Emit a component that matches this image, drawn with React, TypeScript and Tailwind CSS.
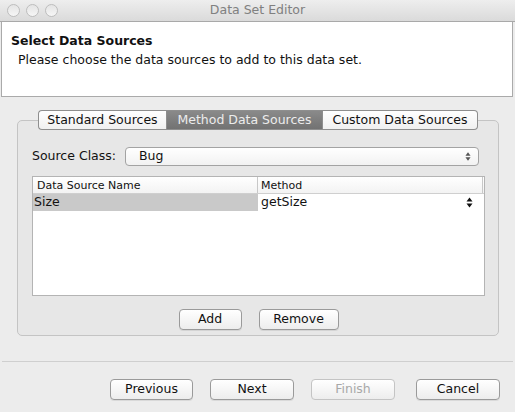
const font = { fontFamily: '"DejaVu Sans", "Lucida Grande", sans-serif' };

const Arrows = ({ color = "#333", w = 7 }: { color?: string; w?: number }) => (
  <svg width={w} height="11" viewBox="0 0 7 11">
    <path d="M3.5 0.5 L6.5 4.5 L0.5 4.5 Z" fill={color} />
    <path d="M0.5 6.5 L6.5 6.5 L3.5 10.5 Z" fill={color} />
  </svg>
);

const Light = () => (
  <div className="w-[13px] h-[13px] rounded-full border border-[#bdbdbd] bg-gradient-to-b from-[#e4e4e4] to-[#f6f6f6]" />
);

const Button = ({ label, w, disabled }: { label: string; w: string; disabled?: boolean }) => (
  <button
    className={`${w} h-[21px] rounded-[4px] border text-[12.5px] leading-none bg-gradient-to-b from-white to-[#ededed] ${
      disabled ? "border-[#c4c4c4] text-[#a8a8a8]" : "border-[#9a9a9a] text-[#111] shadow-[0_1px_0_rgba(0,0,0,0.08)]"
    }`}
  >
    {label}
  </button>
);

const tabs = ["Standard Sources", "Method Data Sources", "Custom Data Sources"];

export default function App() {
  return (
    <div style={font} className="w-[515px] h-[412px] bg-[#ececec] flex flex-col overflow-hidden text-[#111]">
      {/* title bar */}
      <div className="h-[22px] flex items-center bg-gradient-to-b from-[#eeeeee] to-[#dadada] border-b border-[#a9a9a9]">
        <div className="w-[70px] flex gap-[6px] pl-[7px]">
          <Light />
          <Light />
          <Light />
        </div>
        <div className="flex-1 text-center text-[12.5px] text-[#808080]">Data Set Editor</div>
        <div className="w-[70px]" />
      </div>

      {/* header */}
      <div className="h-[75px] bg-white border-b border-r border-l border-[#aaaaaa] pl-[9px] pt-[11px] mr-[2px] ml-[1px]">
        <div className="text-[12.5px] font-bold leading-[16px]">Select Data Sources</div>
        <div className="text-[12.5px] leading-[16px] mt-[3px] pl-[7px]">Please choose the data sources to add to this data set.</div>
      </div>

      {/* tab area */}
      <div className="ml-[17px] w-[482px] mt-[13px]">
        <div className="relative z-10 flex justify-center -mb-[10px]">
          {tabs.map((t, i) => (
            <div
              key={t}
              className={`h-[20px] flex items-center justify-center text-[12.5px] border border-[#8e8e8e] ${
                i === 0 ? "w-[128px] rounded-l-[4px] border-r-0" : i === 1 ? "w-[157px]" : "w-[155px] rounded-r-[4px] border-l-0"
              } ${
                i === 1
                  ? "bg-gradient-to-b from-[#8a8a8a] to-[#727272] text-[#ececec] border-[#6e6e6e]"
                  : "bg-gradient-to-b from-white to-[#f0f0f0] text-[#111]"
              }`}
            >
              {t}
            </div>
          ))}
        </div>
        <div className="h-[216px] rounded-[5px] border border-[#c4c4c4] bg-[#e7e7e7] pt-[26px] pl-[14px] pr-[13px] flex flex-col">
          <div className="flex items-center h-[19px]">
            <span className="text-[12.5px] w-[93px]">Source Class:</span>
            <div className="w-[354px] h-[19px] rounded-[4px] border border-[#a3a3a3] bg-gradient-to-b from-white to-[#f2f2f2] flex items-center pl-[13px] pr-[7px] text-[12.5px]">
              <span className="flex-1">Bug</span>
              <Arrows color="#555" w={6} />
            </div>
          </div>

          <div className="mt-[10px] h-[120px] border border-[#b4b4b4] bg-white flex flex-col">
            <div className="h-[17px] flex text-[11px] leading-none border-b border-[#cfcfcf] bg-gradient-to-b from-white to-[#f3f3f3]">
              <div className="w-[225px] pl-[4px] flex items-center border-r border-[#c8c8c8]">Data Source Name</div>
              <div className="flex-1 pl-[3px] flex items-center border-r border-[#c8c8c8] mr-[1px]">Method</div>
            </div>
            <div className="h-[17px] flex text-[12.5px]">
              <div className="w-[225px] bg-[#c9c9c9] flex items-center pl-[1px]">Size</div>
              <div className="flex-1 flex items-center pl-[3px] pr-[11px]">
                <span className="flex-1">getSize</span>
                <Arrows color="#111" />
              </div>
            </div>
          </div>

          <div className="mt-[13px] flex justify-center gap-[17px]">
            <Button label="Add" w="w-[63px]" />
            <Button label="Remove" w="w-[80px]" />
          </div>
        </div>
      </div>

      {/* separator */}
      <div className="mt-[25px] h-px bg-[#cfcfcf] mx-[2px]" />

      {/* footer buttons */}
      <div className="mt-[17px] flex items-center justify-end pr-[15px]">
        <div className="flex gap-[17px]">
          <Button label="Previous" w="w-[83px]" />
          <Button label="Next" w="w-[84px]" />
          <Button label="Finish" w="w-[84px]" disabled />
        </div>
        <div className="ml-[21px] flex">
          <Button label="Cancel" w="w-[84px]" />
        </div>
      </div>
    </div>
  );
}
